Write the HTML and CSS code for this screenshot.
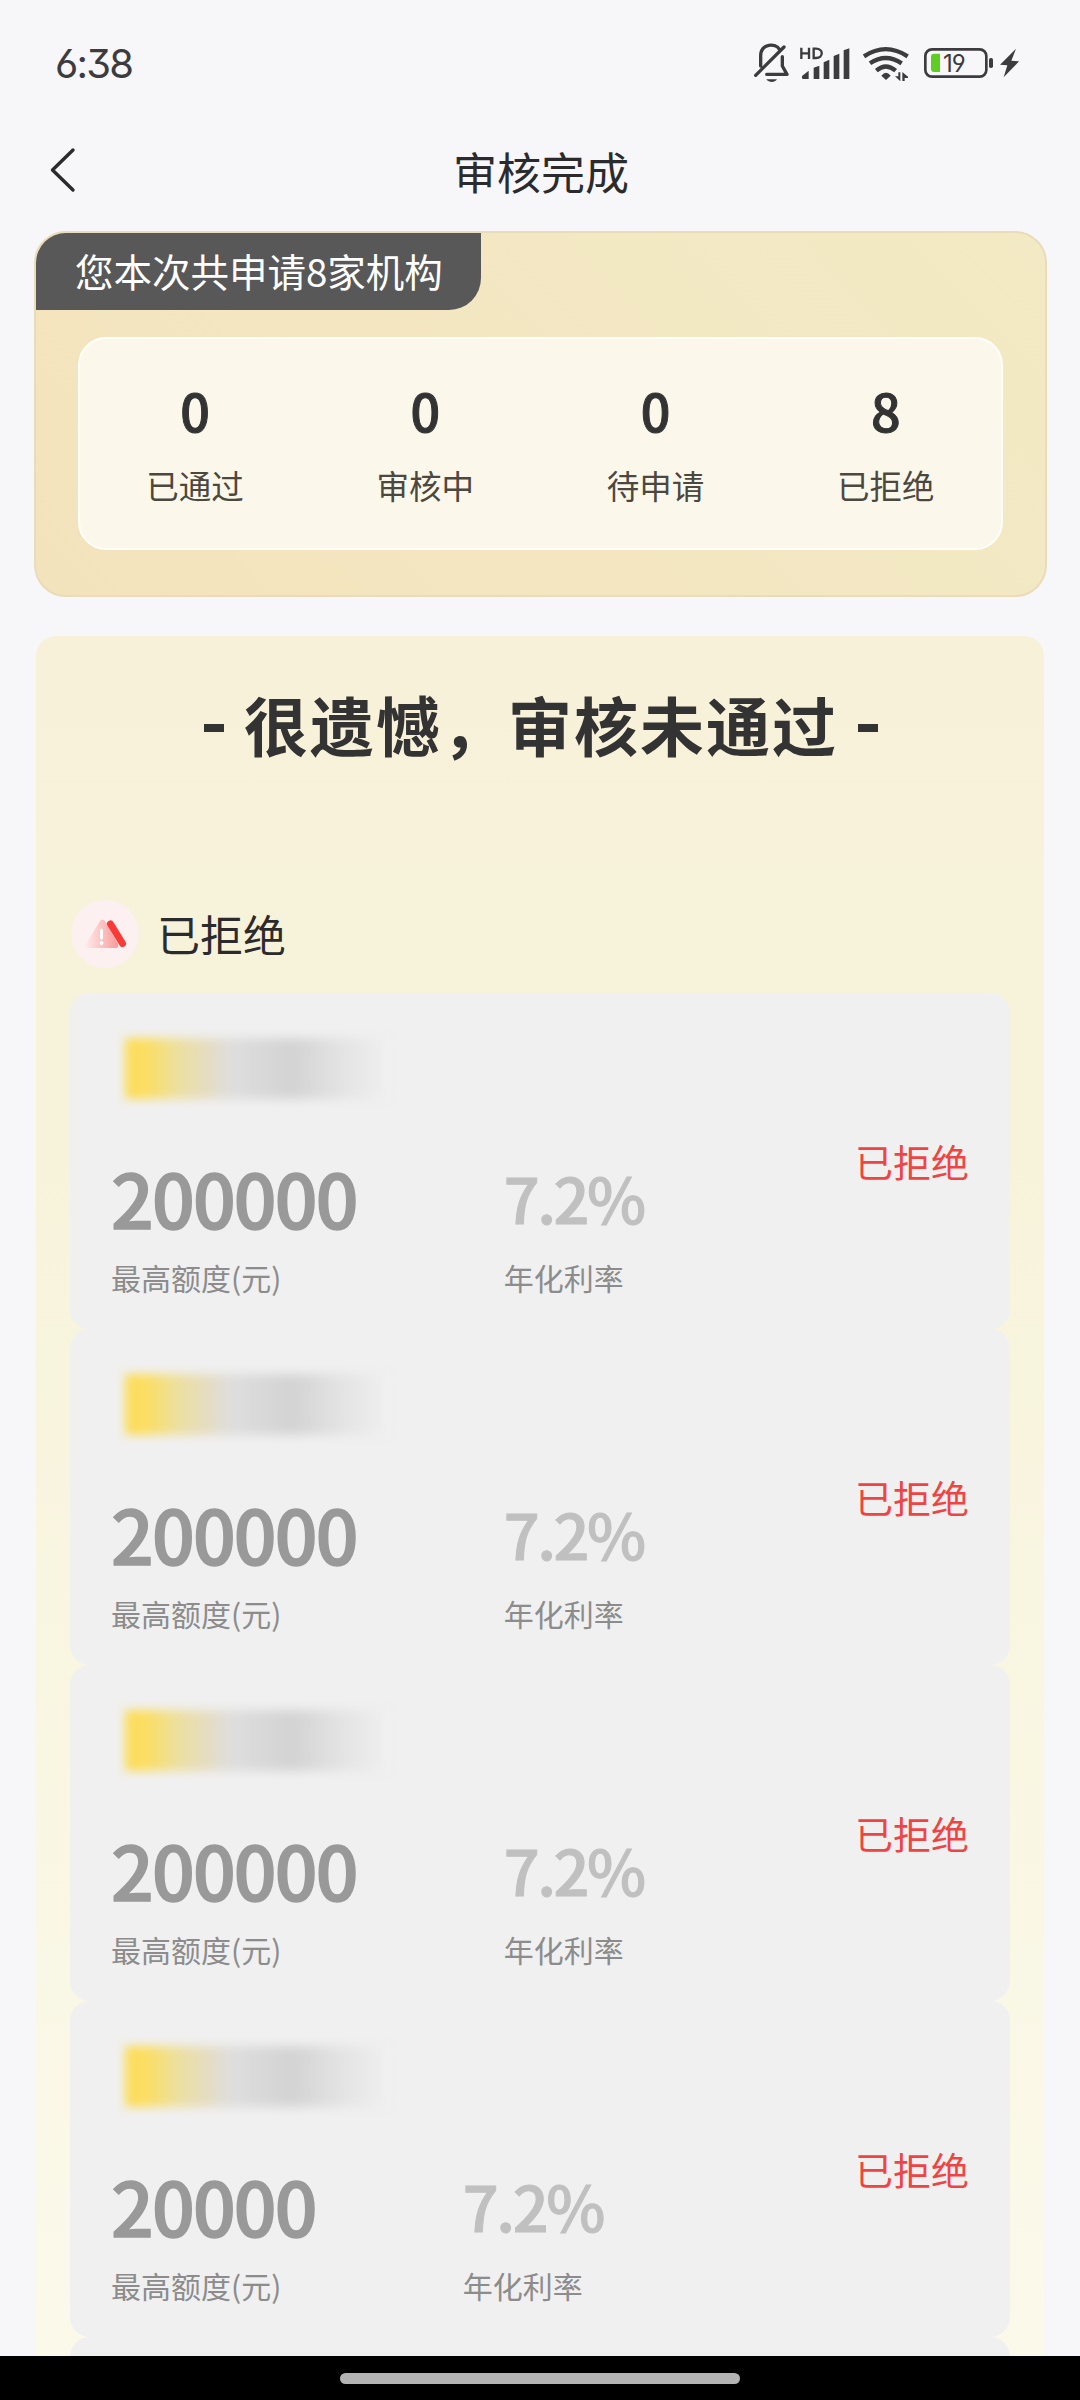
FILE: index.html
```
<!DOCTYPE html>
<html lang="zh-CN">
<head>
<meta charset="utf-8">
<title>审核完成</title>
<link rel="stylesheet" href="styles.css">
</head>
<body>
<div class="screen">
  <header class="status-bar">
    <span class="time">6:38</span>
    <div class="status-icons">
      <svg class="bell" viewBox="99 60 111 135" fill="none" stroke="#3c3c3e" stroke-width="10" stroke-linecap="round" stroke-linejoin="round">
        <path d="M122 138 V108 C122 70 168 68 178 88 M187 110 V138 L201 163 H140 M107 166 L192 81"/>
        <path d="M139 178 H171 C164 189 147 189 139 178 Z" fill="#3c3c3e" stroke="none"/>
      </svg>
      <svg class="signal" viewBox="240 60 150 135" fill="#3c3c3e">
        <path d="M246 168 L266 152 V177 H250 Q246 177 246 173 Z M281 143 L298 137 V177 H281 Z M311 127 L328 119 V177 H311 Z M341 108 L358 101 V177 H341 Z M371 91 L388 85 V177 H371 Z"/>
        <path d="M244 83 V117 M267 83 V117 M244 100 H267 M281 86 V114 H288 C311 114 311 86 288 86 Z" fill="none" stroke="#3c3c3e" stroke-width="7"/>
      </svg>
      <svg class="wifi" viewBox="426 60 144 135" fill="none" stroke="#3c3c3e" stroke-width="13">
        <path d="M432 109 Q497 66 563 109 M450 130 Q497 98 545 130 M469 152 Q497 127 527 152"/>
        <path d="M484 167 Q498 150 512 167 L498 180 Z" fill="#3c3c3e" stroke="none"/>
        <path d="M525 169 L541 184 V157 H535 V169 Z M547 183 V156 L564 170 V174 H554 V183 Z" fill="#3c3c3e" stroke="none"/>
      </svg>
      <div class="battery">
        <svg viewBox="609 60 213 135">
          <rect x="616" y="88" width="183" height="82" rx="20" fill="none" stroke="#3c3c3e" stroke-width="8"/>
          <path d="M642 101 H660 V156 H642 Q633 156 633 147 V110 Q633 101 642 101 Z" fill="#5fce22"/>
          <rect x="807" y="114" width="12" height="30" rx="5" fill="#3c3c3e"/>
        </svg>
        <span class="battery-level">19</span>
      </div>
      <svg class="bolt" viewBox="837 60 63 135" fill="#3c3c3e"><path d="M888 86 L840 134 L862 136 L851 172 L897 124 L874 122 Z"/></svg>
    </div>
  </header>

  <nav class="title-bar">
    <svg class="back" viewBox="0 0 30 48" fill="none" stroke="#2b2b2d" stroke-width="3.4" stroke-linecap="round" stroke-linejoin="round"><path d="M24 4 L3.500 24 L24 44"/></svg>
    <h1>审核完成</h1>
  </nav>

  <section class="summary">
    <div class="summary-tag">您本次共申请8家机构</div>
    <div class="stats">
      <div class="stat"><b>0</b><span>已通过</span></div>
      <div class="stat"><b>0</b><span>审核中</span></div>
      <div class="stat"><b>0</b><span>待申请</span></div>
      <div class="stat"><b>8</b><span>已拒绝</span></div>
    </div>
  </section>

  <main class="panel">
    <h2 class="result"><i></i><span>很遗憾，审核未通过</span><i></i></h2>
    <div class="group-title">
      <svg class="warn" viewBox="0 0 68 68">
        <defs><linearGradient id="fade" x1="0" x2="1"><stop offset="0" stop-color="#fdebea"/><stop offset="1" stop-color="#fb9a9a"/></linearGradient></defs>
        <circle cx="34" cy="34" r="34" fill="#fdf0f0"/>
        <path d="M29 21 Q31 18 34 21 L47 44 Q48 48 45 48 H17 Q13 48 15 44 Z" fill="url(#fade)"/>
        <path d="M39.500 24 L51.500 43.500" stroke="#f93a37" stroke-width="7" stroke-linecap="round"/>
        <path d="M30.500 30 V38" stroke="#fff" stroke-width="3" stroke-linecap="round"/>
        <circle cx="30.500" cy="43" r="2" fill="#fff"/>
      </svg>
      <span>已拒绝</span>
    </div>
    <div class="cards">
      <article class="card">
        <div class="brand"></div>
        <div class="figures">
          <div class="amount"><b>200000</b><span>最高额度(元)</span></div>
          <div class="rate"><b>7.2%</b><span>年化利率</span></div>
        </div>
        <span class="state">已拒绝</span>
      </article>
      <article class="card">
        <div class="brand"></div>
        <div class="figures">
          <div class="amount"><b>200000</b><span>最高额度(元)</span></div>
          <div class="rate"><b>7.2%</b><span>年化利率</span></div>
        </div>
        <span class="state">已拒绝</span>
      </article>
      <article class="card">
        <div class="brand"></div>
        <div class="figures">
          <div class="amount"><b>200000</b><span>最高额度(元)</span></div>
          <div class="rate"><b>7.2%</b><span>年化利率</span></div>
        </div>
        <span class="state">已拒绝</span>
      </article>
      <article class="card">
        <div class="brand"></div>
        <div class="figures">
          <div class="amount"><b>20000</b><span>最高额度(元)</span></div>
          <div class="rate"><b>7.2%</b><span>年化利率</span></div>
        </div>
        <span class="state">已拒绝</span>
      </article>
      <article class="card"></article>
    </div>
  </main>

  <footer class="gesture-bar"><div class="pill"></div></footer>
</div>
</body>
</html>
```
FILE: styles.css
```
* { box-sizing: border-box; margin: 0; padding: 0; }

body {
  background: #f7f7f9;
  font-family: "Noto Sans CJK SC", sans-serif;
  color: #2b2b2d;
}

.screen {
  width: 1080px;
  height: 2400px;
  display: flex;
  flex-direction: column;
  overflow: hidden;
}

.status-bar {
  height: 125px;
  flex: none;
  display: flex;
  justify-content: space-between;
  padding: 40px 60px 0 55px;
  color: #3c3c3e;
}

.time {
  font: 400 40px/47px Inter, sans-serif;
  font-feature-settings: "ss01", "cv09";
  letter-spacing: -1.8px;
}

.status-icons { display: flex; }
.status-icons svg { display: block; height: 45px; }
.bell { width: 37px; }
.signal { width: 50px; margin-left: 10px; }
.wifi { width: 48px; margin-left: 12px; }
.battery { width: 71px; margin-left: 13px; position: relative; }
.battery-level {
  position: absolute;
  left: 20px;
  top: 12px;
  font: 400 24px/24px Inter, sans-serif;
  font-feature-settings: "ss01";
  letter-spacing: -1px;
}
.bolt { width: 21px; margin-left: 5px; }

.title-bar {
  height: 106px;
  flex: none;
  display: grid;
  grid-template-columns: 100px 1fr 98px;
  padding-top: 14px;
}
.back { width: 30px; height: 48px; margin: 7px 0 0 49px; }
.title-bar h1 { font-size: 44px; line-height: 64px; font-weight: 400; text-align: center; }

.summary {
  height: 366px;
  flex: none;
  margin: 0 33px 0 34px;
  border: 2px solid #e9dcb9;
  border-radius: 32px;
  background: linear-gradient(45deg, #f3e3bc, #f3e7c2 50%, #f2eac4);
  overflow: hidden;
}
.summary-tag {
  width: 445px;
  height: 77px;
  padding-left: 39px;
  background: #585858;
  border-radius: 0 0 32px 0;
  color: #fff;
  font-size: 38.5px;
  line-height: 75px;
  white-space: nowrap;
}
.stats {
  height: 213px;
  margin: 27px 42px 0 42px;
  display: grid;
  grid-template-columns: repeat(4, 1fr);
  border: 2px solid #fffefa;
  border-radius: 28px;
  background: #fbf8eb;
}
.stat { display: flex; flex-direction: column; align-items: center; padding-top: 41px; }
.stat b { font-size: 52px; line-height: 60px; font-weight: 500; color: #333; -webkit-text-stroke: 1px #333; }
.stat span { font-size: 32.500px; line-height: 46px; margin-top: 22px; color: #4c4840; }

.panel {
  flex: 0 1 auto;
  min-height: 0;
  margin: 39px 36px 0;
  padding: 0 34px;
  border-radius: 20px 20px 0 0;
  background: linear-gradient(#f7f1d9, #f7f3db 30%, #fbf9ea);
  overflow: hidden;
}
.result {
  height: 180px;
  display: flex;
  align-items: center;
  justify-content: center;
  gap: 20px;
  padding-left: 2px;
  font-size: 64px;
  line-height: 96px;
  font-weight: 700;
  letter-spacing: 2px;
  color: #333;
}
.result span { padding-bottom: 7px; }
.result i { width: 20px; height: 8px; margin-top: 4px; background: #333; }
.group-title {
  height: 177px;
  display: flex;
  align-items: flex-end;
  gap: 18px;
  padding: 0 1px 25px;
  font-size: 43px;
  line-height: 66px;
}
.group-title span { height: 68px; }
.warn { width: 68px; height: 68px; }

.card {
  height: 336px;
  display: grid;
  grid-template-columns: 1fr auto;
  grid-template-rows: 156px 1fr;
  padding: 0 41px;
  border-radius: 20px;
  background: #f0f0f0;
}
.brand {
  width: 265px;
  height: 61px;
  margin: 45px 0 0 14px;
  background: linear-gradient(90deg, #fbdc5a 0, #fbde62 8%, #ecdfa0 20%, #e4dcc4 32%, #dedede 40%, #d3d3d3 63%, #e2e2e2 80%, #f0f0f0);
  filter: blur(5px);
}
.figures { grid-row: 2; display: flex; gap: 147px; white-space: nowrap; }
.amount, .rate { display: flex; flex-direction: column; }
.amount { width: min-content; }
.amount b,
.rate b { line-height: 96px; font-weight: 500; }
.amount b { font-size: 75px; letter-spacing: -1.8px; color: #999; -webkit-text-stroke: 1.5px #999; }
.rate b { font-size: 63px; letter-spacing: -2.4px; color: #c0c0c0; -webkit-text-stroke: 1px #c0c0c0; }
.figures span { font-size: 30px; line-height: 44px; margin-top: 10px; color: #8c8c8c; }
.state { grid-column: 2; grid-row: 1 / 3; align-self: center; font-size: 38px; line-height: 56px; padding-bottom: 1px; color: #ef4444; }

.gesture-bar {
  height: 44px;
  flex: none;
  margin-top: auto;
  display: flex;
  justify-content: center;
  padding-top: 17px;
  background: #000;
}
.pill { width: 400px; height: 11px; border-radius: 6px; background: #b3b3b3; }
```
